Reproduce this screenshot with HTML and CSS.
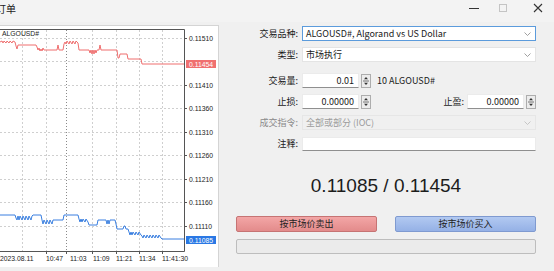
FILE: index.html
```html
<!DOCTYPE html>
<html lang="zh">
<head>
  <meta charset="UTF-8" />
  <title>订单</title>
  <link rel="stylesheet" href="styles.css">
</head>
<body>
  <div class="window">
    <div class="titlebar">
      <span class="title">订单</span>
      <div class="controls">
        <svg class="ctl ctl-min" width="10" height="10" viewBox="0 0 10 10"><line x1="0" y1="5.5" x2="10" y2="5.5" stroke="#333" stroke-width="1"/></svg>
        <svg class="ctl ctl-max" width="10" height="10" viewBox="0 0 10 10"><rect x="1.5" y="1.5" width="7" height="7" fill="none" stroke="#c4c4c4" stroke-width="1"/></svg>
        <svg class="ctl ctl-close" width="10" height="10" viewBox="0 0 10 10"><path d="M1 1 L9 9 M9 1 L1 9" stroke="#333" stroke-width="1.1"/></svg>
      </div>
    </div>

    <div class="content">
      <!-- tick chart -->
      <div class="chart">
        <svg width="218" height="241" viewBox="0 26 218 241">
          <g stroke="#cfcfcf" stroke-width="1" stroke-dasharray="2 2">
            <line x1="0" y1="38.5" x2="184" y2="38.5"/>
            <line x1="0" y1="61.5" x2="184" y2="61.5"/>
            <line x1="0" y1="85.5" x2="184" y2="85.5"/>
            <line x1="0" y1="108.5" x2="184" y2="108.5"/>
            <line x1="0" y1="132.5" x2="184" y2="132.5"/>
            <line x1="0" y1="155.5" x2="184" y2="155.5"/>
            <line x1="0" y1="179.5" x2="184" y2="179.5"/>
            <line x1="0" y1="202.5" x2="184" y2="202.5"/>
            <line x1="0" y1="226.5" x2="184" y2="226.5"/>
            <line x1="22.5" y1="30" x2="22.5" y2="251"/>
            <line x1="46.5" y1="30" x2="46.5" y2="251"/>
            <line x1="92.5" y1="30" x2="92.5" y2="251"/>
            <line x1="116.5" y1="30" x2="116.5" y2="251"/>
            <line x1="139.5" y1="30" x2="139.5" y2="251"/>
            <line x1="162.5" y1="30" x2="162.5" y2="251"/>
          </g>
          <line x1="66.5" y1="30" x2="66.5" y2="251" stroke="#8a8a8a" stroke-width="1" stroke-dasharray="1 2"/>

          <!-- ask -->
          <polyline fill="none" stroke="#ef6f6f" stroke-width="1"
            points="0,42 2,41 3,43 4,41 6,43 7,41 9,43 10,41 12,43 13,41 15,42 16,46 17,49 18,45 36,45 37,47 38,50 39,48 40,51 41,49 42,51 43,48 44,50 47,50 57,50 58,45 59,50 63,50 64,44 65,42 66,44 67,41 69,44 70,41 72,44 73,41 75,44 76,41 78,43 79,50 89,50 90,53 91,50 92,54 93,50 94,54 95,50 96,53 97,50 99,50 100,45 101,50 117,50 118,58 119,58 120,54 127,54 128,59 141,59 142,64 185,64"/>
          <!-- bid -->
          <polyline fill="none" stroke="#3a7fe0" stroke-width="1"
            points="0,215 15,215 16,218 17,220 18,216 19,220 20,216 22,220 23,216 25,220 26,216 28,220 29,216 31,220 32,216 33,215 41,215 42,220 43,224 44,220 46,224 47,220 49,224 50,220 52,224 53,220 55,220 63,220 64,215 78,215 79,219 80,222 81,219 82,222 83,219 85,222 86,219 88,222 89,225 97,225 98,220 106,220 107,224 108,220 109,224 110,220 112,220 115,220 116,224 117,229 123,229 124,226 125,226 126,229 128,229 129,232 130,235 131,232 132,235 133,232 135,235 136,232 138,235 139,232 141,235 142,236 143,238 144,235 146,238 147,235 149,238 150,235 152,238 153,235 155,238 156,235 158,238 159,235 161,238 162,239 185,239"/>

          <!-- plot frame -->
          <path d="M0 29.5 H184.5 V251.5 H0" fill="none" stroke="#555" stroke-width="1"/>
          <g stroke="#555" stroke-width="1">
            <line x1="184" y1="38.5" x2="187" y2="38.5"/>
            <line x1="184" y1="85.5" x2="187" y2="85.5"/>
            <line x1="184" y1="108.5" x2="187" y2="108.5"/>
            <line x1="184" y1="132.5" x2="187" y2="132.5"/>
            <line x1="184" y1="155.5" x2="187" y2="155.5"/>
            <line x1="184" y1="179.5" x2="187" y2="179.5"/>
            <line x1="184" y1="202.5" x2="187" y2="202.5"/>
            <line x1="184" y1="226.5" x2="187" y2="226.5"/>
            <line x1="46.5" y1="251" x2="46.5" y2="254"/>
            <line x1="66.5" y1="251" x2="66.5" y2="254"/>
            <line x1="92.5" y1="251" x2="92.5" y2="254"/>
            <line x1="116.5" y1="251" x2="116.5" y2="254"/>
            <line x1="139.5" y1="251" x2="139.5" y2="254"/>
            <line x1="162.5" y1="251" x2="162.5" y2="254"/>
          </g>

          <g class="axis">
            <text x="2" y="36">ALGOUSD#</text>
            <text x="189" y="41">0.11510</text>
            <text x="189" y="88">0.11410</text>
            <text x="189" y="111">0.11360</text>
            <text x="189" y="135">0.11310</text>
            <text x="189" y="158">0.11260</text>
            <text x="189" y="182">0.11210</text>
            <text x="189" y="205">0.11160</text>
            <text x="189" y="229">0.11110</text>
            <text x="0" y="261">2023.08.11</text>
            <text x="46" y="261">10:47</text>
            <text x="70" y="261">11:03</text>
            <text x="93" y="261">11:09</text>
            <text x="116" y="261">11:21</text>
            <text x="139" y="261">11:34</text>
            <text x="162" y="261">11:41:30</text>
          </g>
          <rect x="186" y="60" width="30" height="8" fill="#f07070"/>
          <text class="axis-tag" x="189" y="66.5">0.11454</text>
          <rect x="186" y="236" width="30" height="8" fill="#2a78e4"/>
          <text class="axis-tag" x="189" y="242.5">0.11085</text>
        </svg>
      </div>

      <!-- order form -->
      <div class="order">
        <div class="row">
          <span class="lbl">交易品种:</span>
          <div class="select select-focus">
            <span>ALGOUSD#, Algorand vs US Dollar</span>
            <svg class="chev" width="7" height="4" viewBox="0 0 7 4"><polyline points="0.5,0.5 3.5,3.5 6.5,0.5" fill="none" stroke="#888" stroke-width="0.8"/></svg>
          </div>
        </div>
        <div class="row">
          <span class="lbl">类型:</span>
          <div class="select">
            <span>市场执行</span>
            <svg class="chev" width="7" height="4" viewBox="0 0 7 4"><polyline points="0.5,0.5 3.5,3.5 6.5,0.5" fill="none" stroke="#888" stroke-width="0.8"/></svg>
          </div>
        </div>

        <div class="row row-gap">
          <span class="lbl">交易量:</span>
          <div class="field">0.01</div>
          <svg class="spin" width="10" height="14" viewBox="0 0 10 14"><rect x="0.5" y="0.5" width="9" height="13" fill="#ececec" stroke="#adadad"/><line x1="2" y1="7" x2="8" y2="7" stroke="#555" stroke-width="0.8"/><polygon points="3,5.2 7,5.2 5,3" fill="#333"/><polygon points="3,8.8 7,8.8 5,11" fill="#333"/></svg>
          <span class="unit">10 ALGOUSD#</span>
        </div>
        <div class="row">
          <span class="lbl">止损:</span>
          <div class="field">0.00000</div>
          <svg class="spin" width="10" height="14" viewBox="0 0 10 14"><rect x="0.5" y="0.5" width="9" height="13" fill="#ececec" stroke="#adadad"/><line x1="2" y1="7" x2="8" y2="7" stroke="#555" stroke-width="0.8"/><polygon points="3,5.2 7,5.2 5,3" fill="#333"/><polygon points="3,8.8 7,8.8 5,11" fill="#333"/></svg>
          <span class="lbl-tp">止盈:</span>
          <div class="field">0.00000</div>
          <svg class="spin" width="10" height="14" viewBox="0 0 10 14"><rect x="0.5" y="0.5" width="9" height="13" fill="#ececec" stroke="#adadad"/><line x1="2" y1="7" x2="8" y2="7" stroke="#555" stroke-width="0.8"/><polygon points="3,5.2 7,5.2 5,3" fill="#333"/><polygon points="3,8.8 7,8.8 5,11" fill="#333"/></svg>
        </div>
        <div class="row row-disabled">
          <span class="lbl">成交指令:</span>
          <div class="select select-disabled">
            <span>全部或部分 (IOC)</span>
            <svg class="chev" width="7" height="4" viewBox="0 0 7 4"><polyline points="0.5,0.5 3.5,3.5 6.5,0.5" fill="none" stroke="#bbb" stroke-width="0.8"/></svg>
          </div>
        </div>
        <div class="row">
          <span class="lbl">注释:</span>
          <div class="field field-wide"></div>
        </div>

        <div class="price">0.11085 / 0.11454</div>

        <div class="actions">
          <div class="btn btn-sell">按市场价卖出</div>
          <div class="btn btn-buy">按市场价买入</div>
        </div>
        <div class="progress"></div>
      </div>
    </div>
  </div>
</body>
</html>
```

FILE: styles.css
```css
body {
  margin: 0;
  background: #f0f0f0;
  font-family: "Noto Sans CJK SC", "Liberation Sans", sans-serif;
  color: #1a1a1a;
  overflow: hidden;
}

.window {
  width: 554px;
  height: 271px;
}

.titlebar {
  height: 22px;
  background: #f3f3f3;
  display: flex;
  align-items: center;
  justify-content: space-between;
}

.title {
  margin-left: -4px;
  font-size: 10px;
  line-height: 14px;
  margin-top: -4px;
}

.controls {
  display: flex;
  align-items: center;
  margin-top: -6px;
}

.ctl {
  display: block;
}

.ctl-min {
  margin-right: 19px;
}

.ctl-max {
  margin-right: 25px;
}

.ctl-close {
  margin-right: 11px;
}

.content {
  display: flex;
}

/* chart panel */
.chart {
  width: 218px;
  height: 241px;
  margin-top: 3px;
  background: #fff;
  border-top: 1px solid #d4d4d4;
  border-right: 1px solid #d4d4d4;
}

.chart svg {
  display: block;
}

.axis {
  font-family: "Liberation Sans", Arial, sans-serif;
  font-size: 6.8px;
  fill: #222;
}

.axis-tag {
  font-family: "Liberation Sans", Arial, sans-serif;
  font-size: 6.8px;
  fill: #fff;
}

/* order form */
.order {
  flex: 1;
  padding: 4px 18px 0 0;
  font-size: 9px;
}

.row {
  display: flex;
  align-items: center;
  height: 15px;
  line-height: 15px;
  margin-bottom: 6px;
}

.row-gap {
  margin-top: 11px;
}

.lbl {
  width: 79px;
  text-align: right;
  margin-right: 4px;
  white-space: nowrap;
}

.row-disabled .lbl {
  color: #8a8a8a;
}

.select {
  flex: 1;
  height: 15px;
  box-sizing: border-box;
  display: flex;
  align-items: center;
  justify-content: space-between;
  padding: 0 4px 0 3px;
  background: #fff;
  border: 1px solid #e4e4e4;
}

.select-focus {
  border-color: #5b9bdc;
}

.select-disabled {
  background: #f0f0f0;
  border-color: #e6e6e6;
  color: #9b9b9b;
}

.field {
  width: 57px;
  height: 15px;
  box-sizing: border-box;
  background: #fff;
  border: 1px solid #ebebeb;
  border-bottom-color: #8f8f8f;
  text-align: right;
  padding-right: 4px;
  line-height: 13px;
}

.field-wide {
  flex: 1;
  height: 14px;
}

.spin {
  display: block;
  margin-left: 2px;
}

.unit {
  margin-left: 6px;
}

.lbl-tp {
  margin-left: auto;
  margin-right: 3px;
}

.price {
  margin-left: 17px;
  margin-top: 23px;
  height: 24px;
  line-height: 24px;
  text-align: center;
  font-family: "Liberation Sans", Arial, sans-serif;
  font-size: 19px;
  color: #1c1c1c;
}

.actions {
  display: flex;
  gap: 18px;
  margin: 18px 0 0 17px;
}

.btn {
  flex: 1;
  height: 16px;
  box-sizing: border-box;
  line-height: 14px;
  text-align: center;
  border-radius: 2px;
  color: #222;
}

.btn-sell {
  background: linear-gradient(#f3a6a6, #e38b8b);
  border: 1px solid #c67474;
}

.btn-buy {
  background: linear-gradient(#b2c9f1, #95b1e6);
  border: 1px solid #7f9ad0;
}

.progress {
  height: 15px;
  box-sizing: border-box;
  margin: 7px 0 0 17px;
  background: #ebebeb;
  border: 1px solid #bdbdbd;
  border-radius: 2px;
}
```
